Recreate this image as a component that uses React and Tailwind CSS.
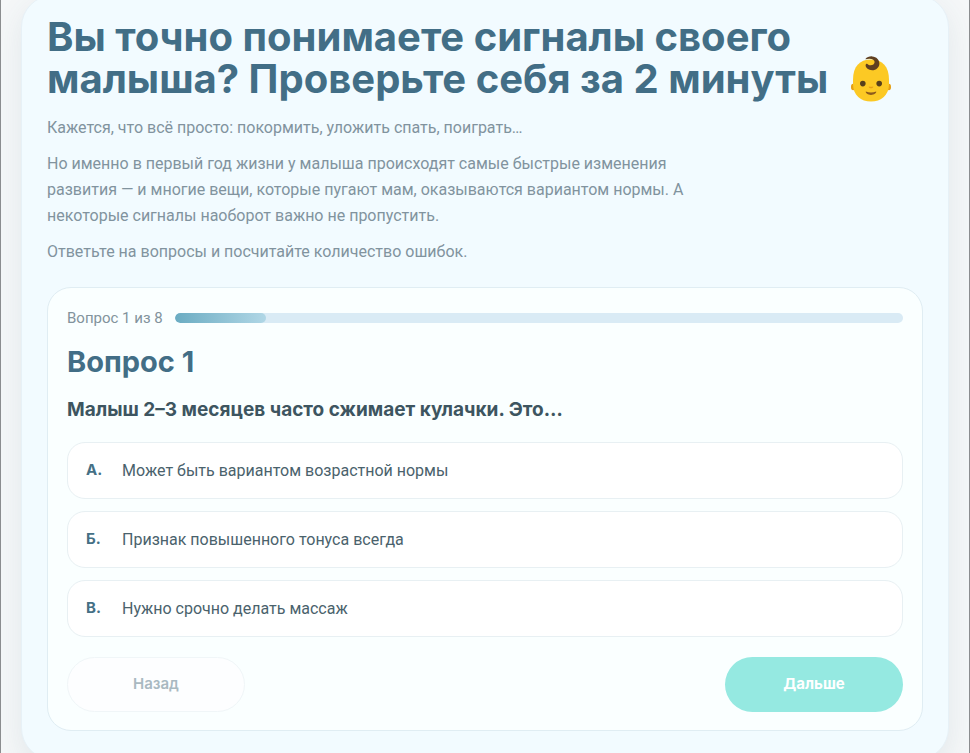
import React, { useState } from 'react';

const OPTIONS = [
  { id: 'a', letter: 'А.', text: 'Может быть вариантом возрастной нормы' },
  { id: 'b', letter: 'Б.', text: 'Признак повышенного тонуса всегда' },
  { id: 'c', letter: 'В.', text: 'Нужно срочно делать массаж' },
];

const TOTAL = 8;

function BabyIcon() {
  return (
    <svg viewBox="0 0 42 46" className="-mt-4 -mb-2.5 ml-3 inline-block h-[46px] w-[42px] align-middle" role="img" aria-label="Малыш">
      <ellipse cx="3.2" cy="31" rx="2.2" ry="3.2" fill="#e59f14" />
      <ellipse cx="38.8" cy="31" rx="2.2" ry="3.2" fill="#e59f14" />
      <path d="M21 3.500C9.500 3.500 3 10.500 3 24v4C3 39.500 11 45.500 21 45.500S39 39.500 39 28v-4C39 10.500 32.500 3.500 21 3.500z" fill="#fcc924" />
      {/* Curl */}
      <path d="M15.2 3.200C17 1.200 19.600.2 22.200.4c4.200.3 7.200 3.300 7.200 7 0 3.900-3.200 6.800-7.200 6.800-3.700 0-6.400-2.200-6.600-4.600-.1-1.200.7-1.900 1.700-1.700.7.100 1.200.6 1.400 1.200 3 .9 5.900-.5 5.900-3 0-2.800-3.600-4.300-9.400-2.900z" fill="#5f3f20" />
      <circle cx="12.800" cy="27.600" r="2.800" fill="#57401c" />
      <circle cx="29.200" cy="27.600" r="2.800" fill="#57401c" />
      <path d="M18.800 30.400c1.400.6 3 .6 4.400 0 .3.900-.9 1.800-2.200 1.800s-2.500-.9-2.200-1.800z" fill="#e59f14" />
      <path d="M15.800 35.600c3.400 1.300 7 1.300 10.400 0 .3 1.700-2.100 3.300-5.200 3.300s-5.500-1.600-5.200-3.300z" fill="#8d5a1c" />
    </svg>
  );
}

function Option({ option, checked, onSelect }) {
  return (
    <label className="flex h-[57px] cursor-pointer items-center rounded-[18px] border border-[#e8f0f3] bg-white px-[18px] has-checked:border-[#68adc4]">
      <input
        type="radio"
        name="answer"
        value={option.id}
        checked={checked}
        onChange={() => onSelect(option.id)}
        className="sr-only"
      />
      <span className="w-9 font-[Inter,sans-serif] text-[15px] font-bold text-[#457085]">{option.letter}</span>
      <span className="text-base text-[#4a626c]">{option.text}</span>
    </label>
  );
}

export default function App() {
  const [answer, setAnswer] = useState(null);
  const step = 1;

  return (
    <main className="h-screen overflow-hidden border-x border-[#8b8d8f] bg-[#f5f7f8] px-5 font-[Roboto,sans-serif]">
      <section className="-mt-[5px] rounded-[32px] border border-[#e7f1f7] bg-[#f2fbff] px-[25px] pt-5 pb-7 shadow-[0_10px_30px_rgba(60,100,120,0.1)]">
        <h1 className="font-[Inter,sans-serif] text-[40px] leading-[42px] font-bold text-[#426e86]">
          Вы точно понимаете сигналы своего малыша? Проверьте себя за 2 минуты <BabyIcon />
        </h1>

        {/* Intro */}
        <div className="mt-[15px] max-w-[650px] space-y-2.5 text-base leading-[26px] text-[#81939e]">
          <p>Кажется, что всё просто: покормить, уложить спать, поиграть…</p>
          <p>
            Но именно в первый год жизни у малыша происходят самые быстрые изменения развития — и многие вещи, которые
            пугают мам, оказываются вариантом нормы. А некоторые сигналы наоборот важно не пропустить.
          </p>
          <p>Ответьте на вопросы и посчитайте количество ошибок.</p>
        </div>

        {/* Quiz card */}
        <form
          className="mt-[22px] rounded-[24px] border border-[#e0edf3] bg-[#fafffF] px-[19px] pt-5 pb-[18px]"
          onSubmit={(e) => e.preventDefault()}
        >
          <div className="flex items-center gap-3">
            <span className="text-[15px] leading-5 text-[#82939c]">
              Вопрос {step} из {TOTAL}
            </span>
            <div className="h-2.5 flex-1 overflow-hidden rounded-full bg-[#d9ebf5]">
              <div
                className="h-full rounded-full bg-linear-to-r from-[#6aacc2] to-[#b0d7e6]"
                style={{ width: `${(step / TOTAL) * 100}%` }}
              />
            </div>
          </div>

          <h2 className="mt-4 font-[Inter,sans-serif] text-[29px] leading-9 font-bold text-[#426e86]">Вопрос {step}</h2>

          <fieldset className="mt-4">
            <legend className="font-[Inter,sans-serif] text-[19px] leading-7 font-bold text-[#3d5560]">
              Малыш 2–3 месяцев часто сжимает кулачки. Это…
            </legend>
            <div className="mt-[18px] space-y-3">
              {OPTIONS.map((option) => (
                <Option key={option.id} option={option} checked={answer === option.id} onSelect={setAnswer} />
              ))}
            </div>
          </fieldset>

          <div className="mt-5 flex justify-between font-[Inter,sans-serif] text-[15px]">
            <button
              type="button"
              className="h-[55px] w-[178px] rounded-full border border-[#f0f6f8] bg-[#fdfeff] font-semibold text-[#a9b9c1]"
            >
              Назад
            </button>
            <button type="submit" className="h-[55px] w-[178px] rounded-full bg-[#95e9e1] font-bold text-white">
              Дальше
            </button>
          </div>
        </form>
      </section>
    </main>
  );
}
